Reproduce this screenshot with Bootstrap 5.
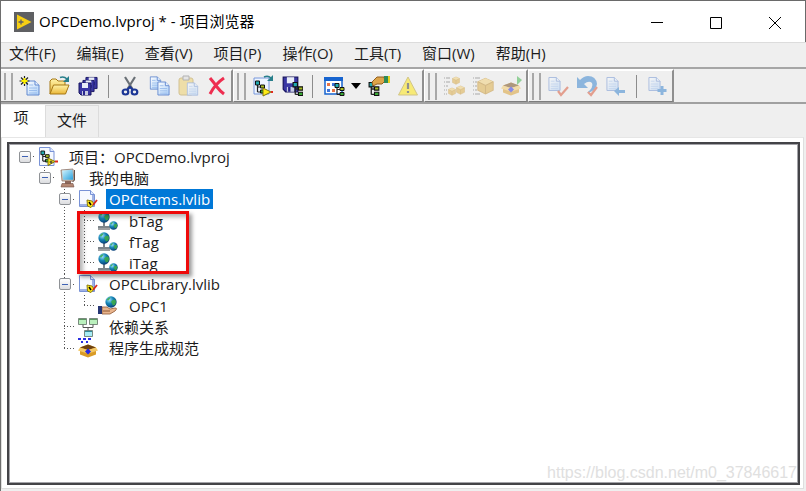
<!DOCTYPE html>
<html lang="zh-CN">
<head>
<meta charset="utf-8">
<meta name="viewport" content="width=device-width, initial-scale=1">
<title>OPCDemo.lvproj * - 项目浏览器</title>
<link href="https://cdn.jsdelivr.net/npm/bootstrap@5.3.0/dist/css/bootstrap.min.css" rel="stylesheet">
<style>
body { font-family: "Open Sans", "Noto Sans CJK SC", sans-serif; font-size: 15px; line-height: 20px; color: #1c1c1c; background: #efefef; }
.win { border-left: 1px solid #6e6e6e; }
.titlebar { height: 42px; border-top: 1px solid #6a6a6a; border-right: 1px solid #6a6a6a; background: #fff; color: #000; padding-right: 1px; }
.titlebar .caption-text { padding-bottom: 2px; }
.app-logo { width: 20px; height: 20px; margin-left: 13px; margin-right: 5px; }
.win-btn { width: 59px; height: 40px; }
.tool, .win-btn, .menu-btn { border: 0; background: transparent; padding: 0; color: inherit; }
.menubar { height: 27px; border-top: 1px solid #dcdcdc; border-bottom: 2px solid #a6a6a6; padding: 0 0 4px 8px; gap: 21px; }
.toolstrip { height: 35px; border-bottom: 2px solid #a0a0a0; }
.tool-group { height: 33px; border-top: 2px solid #fff; border-right: 2px solid #8f8f8f; border-bottom: 1px solid #7c7c7c; }
.tool-group + .tool-group { border-left: 1px solid #fff; }
.grip { width: 9px; height: 27px; margin: 0 2px 0 3px; border: solid #a8a8a8; border-width: 0 2px; }
.tool { width: 29px; height: 28px; }
.tool svg { width: 22px; height: 22px; display: block; margin: auto; }
.tool:disabled svg { opacity: .5; }
.tool-arrow { width: 16px; }
.tool-arrow svg { width: 10px; height: 6px; }
.tool-sep { width: 1px; height: 23px; margin: 0 6px; background: #8c8c8c; }
.tabs { height: 33px; padding-top: 1px; }
.tab-btn { border: 0; padding: 0; background: #efefef; color: inherit; }
.tab-btn.current { width: 44px; background: #fff; padding: 0 4px 8px 0; }
.tab-btn.other { width: 54px; border: 1px solid #dcdcdc; border-bottom: 0; padding-bottom: 3px; }
.page-body { border: 1px solid #dedede; border-top-color: #e6e6e6; background: #fff; padding: 4px 3px 3px 5px; margin-right: 2px; margin-bottom: 2px; }
.tree-box { border: 2px solid #434347; box-shadow: inset 0 0 0 1px #a3a3a8; padding: 2px 6px; }
.tree { height: 213px; }
.node { flex: 1 1 0; min-height: 0; }
.cell { width: 20px; align-self: stretch; --dots-v: repeating-linear-gradient(#555 0 1px, transparent 1px 3px); --dots-h: repeating-linear-gradient(90deg, #555 0 1px, transparent 1px 3px); background-repeat: no-repeat; }
.line-v { background-image: var(--dots-v); background-size: 1px 100%; background-position: 9px 0; }
.line-tee { background-image: var(--dots-v), var(--dots-h); background-size: 1px 100%, 11px 1px; background-position: 9px 0, 9px 10px; }
.line-end { background-image: var(--dots-v), var(--dots-h); background-size: 1px 11px, 11px 1px; background-position: 9px 0, 9px 10px; }
.line-h { background-image: var(--dots-h); background-size: 8px 1px; background-position: 12px 10px; }
.toggle { display: block; width: 12px; height: 12px; padding: 0; border: 1px solid #8f9296; border-radius: 2px; background: linear-gradient(#3f62b4, #3f62b4) center / 6px 1px no-repeat, linear-gradient(#fff, #dcdde0); }
.node-icon { width: 20px; height: 20px; margin: 0 8px 0 3px; flex: none; }
.node-label { padding: 0 3px; white-space: nowrap; }
.chosen { background: #0078d7; color: #fff; }
.callout-box { left: 68px; top: 67px; width: 112px; height: 63px; border: 3px solid #ee0a0a; box-shadow: 3px 3px 4px rgba(0,0,0,.4), inset 3px 3px 4px rgba(0,0,0,.3); pointer-events: none; }
.source-note { right: 1px; bottom: 0; font: 16px/20px "Liberation Sans", sans-serif; color: #e0e0e0; }
</style>
<script src="https://cdn.jsdelivr.net/npm/bootstrap@5.3.0/dist/js/bootstrap.bundle.min.js"></script>
</head>
<body>
<svg class="position-absolute" width="0" height="0" aria-hidden="true">
  <defs>
    <linearGradient id="gBlue" x2="1" y2="1"><stop stop-color="#fff"/><stop offset="1" stop-color="#a9cdf6"/></linearGradient>
    <linearGradient id="gGold" x2="0" y2="1"><stop stop-color="#fff3a8"/><stop offset="1" stop-color="#eab637"/></linearGradient>
    <radialGradient id="gGlobe" cx=".35" cy=".3" r=".75"><stop stop-color="#9fe0ff"/><stop offset=".45" stop-color="#1687b8"/><stop offset="1" stop-color="#083a74"/></radialGradient>
    <linearGradient id="gScreen" x2="1" y2="1"><stop stop-color="#d4f5ff"/><stop offset="1" stop-color="#28a0dc"/></linearGradient>
  </defs>
  <symbol id="page" viewBox="0 0 14 16"><path d="M1 1h8l4 4v10H1z" fill="url(#gBlue)" stroke="#6389cf"/><path d="M9 1v4h4" fill="#e7f1ff" stroke="#6389cf"/></symbol>
  <symbol id="textpage" viewBox="0 0 14 16"><use href="#page" width="14" height="16"/><path d="M3 5h4M3 8h8M3 10.500h8M3 13h8" stroke="#8db4ea" stroke-width=".8"/></symbol>
  <symbol id="hier" viewBox="0 0 12 14"><path d="M3 3v9M3 7h5M3 12h5" fill="none" stroke="#222" stroke-width="1.2"/><path d="M1 1h4v4H1z" fill="#20aab0" stroke="#111"/><path d="M6 5h4v3H6z" fill="#a7bd20" stroke="#111"/><path d="M6 10h4v3H6z" fill="#38a934" stroke="#111"/></symbol>
  <symbol id="globe" viewBox="0 0 10 10"><circle cx="5" cy="5" r="4.7" fill="url(#gGlobe)"/><path d="M1.500 3Q3 1 4.500 1L4 2.500 2.500 4zM6 3.500l2.500-.500.800 2-1 2.500L6.500 8 6 6.500 5 5z" fill="#3fae45" opacity=".85"/></symbol>
  <symbol id="floppy" viewBox="0 0 14 14"><path d="M1 1h12v12H3l-2-2z" fill="#3a37a4" stroke="#17145f"/><path d="M4 1h6v5H4z" fill="#e9edf8"/><path d="M4 9h6v4H4z" fill="#c7cbe0"/><path d="M5 9h2v4H5z" fill="#29268f"/></symbol>
  <symbol id="cube" viewBox="0 0 10 10"><path d="M5 .5 9.500 2.500v5L5 9.700.500 7.500v-5z" fill="#dcaa3b" stroke="#c18e2c" stroke-width=".6"/><path d="M5 .5 9.500 2.500 5 4.700.500 2.500z" fill="#f2cf73"/><path d="M5 4.700v5M.500 2.500 5 4.700l4.500-2.200" fill="none" stroke="#b98522" stroke-width=".6"/></symbol>
  <symbol id="openbox" viewBox="0 0 20 14"><path d="M2 4 10 1l8 3v7l-8 3-8-3z" fill="#d99b26"/><path d="m2 4 8 2.500L18 4 10 1z" fill="#6e4210"/><path d="M2 4 0 7l8 2.500 2-3zM18 4l2 3-8 2.500-2-3z" fill="#f3c868"/><path d="m10 5 3 3-3 3-3-3z" fill="#2329e4"/></symbol>
  <symbol id="computer" viewBox="0 0 20 20"><path d="m3 2 12-1 1 12H4z" fill="#d7c2b2" stroke="#8a766c" stroke-width=".8"/><path d="m4 2.500 10.500-.700.700 10H5z" fill="url(#gScreen)"/><path d="M7 13h6v3H7z" fill="#8c675a"/><path d="M4 15.500h11l1 3.500H3z" fill="#b48874" stroke="#725047" stroke-width=".6"/><path d="M16.500 2v10l-2 2" fill="none" stroke="#66524a"/></symbol>
  <symbol id="lib" viewBox="0 0 20 20"><path d="M1.500 1.500h11l4 4v12h-15z" fill="#f6f9ff" stroke="#7892d6"/><path d="M2 15h14v2H2zM14 5h2v11h-2z" fill="#9fb1e4"/><path d="M12.500 1.500v4h4" fill="#dce7ff" stroke="#7892d6"/><path d="m9 11 5 1 2 3-3 3.500L9.500 17z" fill="#ffe81a" stroke="#8c7d0c"/><path d="m11 13 2 3" stroke="#000" stroke-width="1.500"/><path d="m15 16 4-5" stroke="#d9261c" stroke-width="1.800"/></symbol>
  <symbol id="proj" viewBox="0 0 20 20"><path d="M1.500 .5H12l4 4v14H1.500z" fill="#f4f8ff" stroke="#7892d6"/><path d="M12 .5v4h4" fill="#dce7ff" stroke="#7892d6"/><use href="#hier" x="2" y="3" width="11" height="13"/><path d="m10 11 7 3.500-7 4z" fill="#ffec16" stroke="#7f750c"/><path d="M17 14.500h3" stroke="#e02b20" stroke-width="2"/><path d="M11.500 15h3M13 13.500v3" stroke="#333"/></symbol>
  <symbol id="tag" viewBox="0 0 20 20"><path d="M6 8v8M0 16h12" stroke="#7c858b" stroke-width="2"/><path d="M0 18h12" stroke="#3a4145"/><use href="#globe" x="0" y="0" width="12" height="12"/><use href="#globe" x="11" y="10" width="9" height="9"/></symbol>
  <symbol id="opc" viewBox="0 0 20 20"><path d="M4 11h5l3 2 5-1q3 0 0 3l-5 3H4z" fill="#e8b48d" stroke="#8e5630" stroke-width=".8"/><path d="M5 15h7" stroke="#8e5630"/><path d="M0 10h4v8H0z" fill="#273774"/><use href="#globe" x="7" y="0" width="12" height="12"/></symbol>
  <symbol id="deps" viewBox="0 0 20 20"><path d="M5 7v3.500h10V7M10 10v4" fill="none" stroke="#545454"/><g stroke="#5f6e64" stroke-width=".8"><path d="M.500 1.500h8v6h-8zM11.500 1.500h8v6h-8z" fill="#baf0bd"/><path d="M6.500 13.500h8v6h-8z" fill="#a8edf5"/></g><path d="M1 2h7v1H1zM12 2h7v1h-7z" fill="#5b9762"/><path d="M7 14h7v1H7z" fill="#328998"/></symbol>
  <symbol id="build" viewBox="0 0 20 20"><path d="M0 0h3v2H0zM5 0h3v2H5zM10 0h3v2h-3zM3 3h2v2H3zM8 3h2v2H8z" fill="#2a2ee0"/><use href="#openbox" x="0" y="5" width="20" height="15"/></symbol>
</svg>

<div class="win d-flex flex-column min-vh-100">
  <header class="titlebar d-flex align-items-center">
    <svg class="app-logo" viewBox="0 0 20 20" aria-hidden="true"><path fill="#5f6063" d="M0 0h20v20H0z"/><path d="M3 2.500v15L17.500 10z" fill="#f7cf14"/><path d="M4.500 10h5M7 7.500v5" stroke="#5f6063" stroke-width="1.300"/></svg>
    <div class="caption-text me-auto">OPCDemo.lvproj * - 项目浏览器</div>
    <button class="win-btn" type="button" aria-label="最小化"><svg width="12" height="12" viewBox="0 0 12 12"><path d="M0 5.500h12" stroke="#000"/></svg></button>
    <button class="win-btn" type="button" aria-label="最大化"><svg width="12" height="12" viewBox="0 0 12 12"><path d="M.500.500h11v11H.500z" fill="none" stroke="#000"/></svg></button>
    <button class="win-btn" type="button" aria-label="关闭"><svg width="12" height="12" viewBox="0 0 12 12"><path d="m0 0 12 12M12 0 0 12" stroke="#000"/></svg></button>
  </header>

  <nav class="menubar d-flex align-items-center" aria-label="菜单">
    <button class="menu-btn" type="button">文件(F)</button>
    <button class="menu-btn" type="button">编辑(E)</button>
    <button class="menu-btn" type="button">查看(V)</button>
    <button class="menu-btn" type="button">项目(P)</button>
    <button class="menu-btn" type="button">操作(O)</button>
    <button class="menu-btn" type="button">工具(T)</button>
    <button class="menu-btn" type="button">窗口(W)</button>
    <button class="menu-btn" type="button">帮助(H)</button>
  </nav>

  <div class="toolstrip d-flex" role="toolbar" aria-label="工具栏">
    <div class="tool-group d-flex align-items-center">
      <span class="grip"></span>
      <button class="tool" type="button" aria-label="新建"><svg viewBox="0 0 22 22"><use href="#textpage" x="7" y="5" width="14" height="16"/><path d="M5.500 1v10M.500 6h10M2 2.500l7 7M9 2.500l-7 7" stroke="#222" stroke-width="1.200"/><path d="M5.500 3v6M2.500 6h6" stroke="#fff200" stroke-width="2.200"/></svg></button>
      <button class="tool" type="button" aria-label="打开"><svg viewBox="0 0 22 22"><path d="M2 19V6l2-2h4l2 2h7v4" fill="url(#gGold)" stroke="#a67816"/><path d="m2 19 3.500-9H21l-3.500 9z" fill="url(#gGold)" stroke="#a67816"/><path d="M12 2.500q4-1.500 7 1.500" fill="none" stroke="#287f8b" stroke-width="1.500"/><path d="M21 1v6h-6z" fill="#287f8b"/></svg></button>
      <button class="tool" type="button" aria-label="全部保存"><svg viewBox="0 0 22 22"><use href="#floppy" x="8" y="1" width="13" height="14"/><use href="#floppy" x="5" y="4" width="13" height="14"/><use href="#floppy" x="1" y="7" width="14" height="14"/></svg></button>
      <span class="tool-sep"></span>
      <button class="tool" type="button" aria-label="剪切"><svg viewBox="0 0 22 22"><path d="m6 2 7.500 12M16 2 8.500 14" stroke="#6a7076" stroke-width="2.200"/><g fill="none" stroke="#1c3796" stroke-width="2.200"><ellipse cx="6.500" cy="17" rx="2.800" ry="2.500"/><ellipse cx="15.500" cy="17" rx="2.800" ry="2.500"/><path d="m8 15 3-3 3 3"/></g></svg></button>
      <button class="tool" type="button" aria-label="复制"><svg viewBox="0 0 22 22"><use href="#textpage" x="1" y="1" width="13" height="14"/><use href="#textpage" x="9" y="6" width="13" height="15"/></svg></button>
      <button class="tool" type="button" aria-label="粘贴" disabled><svg viewBox="0 0 22 22"><rect x="2" y="3" width="14" height="17" rx="2" fill="#eecf63" stroke="#b5943d"/><path d="M6 1h6v4H6z" fill="#ddd" stroke="#777"/><use href="#textpage" x="9" y="7" width="13" height="14"/></svg></button>
      <button class="tool" type="button" aria-label="删除"><svg viewBox="0 0 22 22"><path d="M4 3q5 6 7 9 3 4 7 7M18 3Q9 9 4 19" fill="none" stroke="#ee2e50" stroke-width="3"/></svg></button>
    </div>
    <div class="tool-group d-flex align-items-center">
      <span class="grip"></span>
      <button class="tool" type="button" aria-label="项目属性"><svg viewBox="0 0 22 22"><path d="M2 3h15v16H2z" fill="#eef5ff" stroke="#7898dc"/><use href="#hier" x="2" y="5" width="13" height="14"/><path d="m11 13 8 4-8 4z" fill="#ffec16" stroke="#7f750c"/><path d="M19 17h2" stroke="#e02b20" stroke-width="2"/><path d="M12 2q4-2 7 1" fill="none" stroke="#287f8b" stroke-width="1.500"/><path d="M21 0v6h-6z" fill="#287f8b"/></svg></button>
      <button class="tool" type="button" aria-label="保存项目"><svg viewBox="0 0 22 22"><use href="#floppy" x="1" y="1" width="17" height="17"/><use href="#hier" x="11" y="6" width="13" height="16"/></svg></button>
      <span class="tool-sep"></span>
      <button class="tool" type="button" aria-label="视图"><svg viewBox="0 0 22 22"><path d="M2 3h17v16H2z" fill="#fff" stroke="#1764cf" stroke-width="1.500"/><path d="M1 2h19v4H1z" fill="#1764cf"/><path d="M4 8h3v3H4zM9 14h3v3H9z" fill="#e87445"/><path d="M9 8h3v3H9zM4 14h3v3H4z" fill="#3e75dc"/><use href="#hier" x="11" y="7" width="12" height="15"/></svg></button>
      <button class="tool tool-arrow" type="button" aria-label="视图选项"><svg viewBox="0 0 10 6"><path d="M0 0h10L5 6z"/></svg></button>
      <button class="tool" type="button" aria-label="筛选"><svg viewBox="0 0 22 22"><use href="#hier" x="0" y="6" width="13" height="16"/><path d="M4 7 9 2h7l1 4-3 3H9l-4 2z" fill="#dda448" stroke="#925f20"/><path d="M16 1h5v7h-5z" fill="#2d8a58"/><path d="M20 1h2v7h-2z" fill="#e5d21e"/></svg></button>
      <button class="tool" type="button" aria-label="冲突" disabled><svg viewBox="0 0 22 22"><path d="M11 2 20.500 20h-19z" fill="#ffe600" stroke="#b59c23" stroke-linejoin="round"/><path d="M11 8v6M11 16v2" stroke="#333" stroke-width="2.200"/></svg></button>
    </div>
    <div class="tool-group d-flex align-items-center">
      <span class="grip"></span>
      <button class="tool" type="button" aria-label="全部生成" disabled><svg viewBox="0 0 22 22"><path d="M1 3h6M1 7h6M1 11h4M1 15h3M1 19h3" stroke="#666" stroke-dasharray="1 1 4 0"/><use href="#cube" x="9" y="1" width="8" height="9"/><use href="#cube" x="5" y="12" width="8" height="9"/><use href="#cube" x="13" y="10" width="9" height="10"/></svg></button>
      <button class="tool" type="button" aria-label="生成" disabled><svg viewBox="0 0 22 22"><path d="M1 3h7M1 7h4M1 11h4M1 15h4M1 19h7" stroke="#666" stroke-dasharray="1 1 5 0"/><use href="#cube" x="5" y="2" width="17" height="18"/></svg></button>
      <button class="tool" type="button" aria-label="部署" disabled><svg viewBox="0 0 22 22"><use href="#openbox" x="0" y="6" width="20" height="15"/><path d="m16 1 5 4-5 5z" fill="#38b344"/></svg></button>
    </div>
    <div class="tool-group d-flex align-items-center">
      <span class="grip"></span>
      <button class="tool" type="button" aria-label="签入" disabled><svg viewBox="0 0 22 22"><use href="#textpage" x="1" y="1" width="13" height="16"/><path d="m11 16 3 4 7-8" fill="none" stroke="#d8502f" stroke-width="2.200"/></svg></button>
      <button class="tool" type="button" aria-label="撤销签出" disabled><svg viewBox="0 0 22 22"><path d="M1 2v11h11L8 9q5-4 8-1 2 4-5 10 9-2 10-9-1-8-9-8-4 0-8 4z" fill="#2b7dcd"/><path d="m12 17 3 3 6-8" fill="none" stroke="#d8502f" stroke-width="2.200"/></svg></button>
      <button class="tool" type="button" aria-label="签出" disabled><svg viewBox="0 0 22 22"><use href="#textpage" x="1" y="1" width="13" height="16"/><path d="m9 16 5-4v3h6v3h-6v3z" fill="#2b7dcd"/></svg></button>
      <span class="tool-sep"></span>
      <button class="tool" type="button" aria-label="添加" disabled><svg viewBox="0 0 22 22"><use href="#textpage" x="1" y="1" width="13" height="16"/><path d="M15 11v9M10.500 15.500h9" stroke="#2b7dcd" stroke-width="3"/></svg></button>
    </div>
  </div>

  <div class="tabs d-flex" role="tablist">
    <button class="tab-btn current" type="button" role="tab" aria-selected="true">项</button>
    <button class="tab-btn other" type="button" role="tab" aria-selected="false">文件</button>
  </div>

  <main class="page-body flex-grow-1 d-flex">
    <div class="tree-box flex-grow-1 position-relative">
      <div class="tree d-flex flex-column" role="tree" aria-label="项目">
        <div class="node d-flex align-items-center" role="treeitem" aria-level="1">
          <span class="cell line-h d-flex align-items-center ps-1"><button class="toggle" type="button" aria-label="折叠"></button></span>
          <svg class="node-icon"><use href="#proj"/></svg><span class="node-label">项目：OPCDemo.lvproj</span>
        </div>
        <div class="node d-flex align-items-center" role="treeitem" aria-level="2">
          <span class="cell"></span><span class="cell line-end d-flex align-items-center ps-1"><button class="toggle" type="button" aria-label="折叠"></button></span>
          <svg class="node-icon"><use href="#computer"/></svg><span class="node-label">我的电脑</span>
        </div>
        <div class="node d-flex align-items-center" role="treeitem" aria-level="3">
          <span class="cell"></span><span class="cell"></span><span class="cell line-tee d-flex align-items-center ps-1"><button class="toggle" type="button" aria-label="折叠"></button></span>
          <svg class="node-icon"><use href="#lib"/></svg><span class="node-label chosen">OPCItems.lvlib</span>
        </div>
        <div class="node d-flex align-items-center" role="treeitem" aria-level="4">
          <span class="cell"></span><span class="cell"></span><span class="cell line-v"></span><span class="cell line-tee"></span>
          <svg class="node-icon"><use href="#tag"/></svg><span class="node-label">bTag</span>
        </div>
        <div class="node d-flex align-items-center" role="treeitem" aria-level="4">
          <span class="cell"></span><span class="cell"></span><span class="cell line-v"></span><span class="cell line-tee"></span>
          <svg class="node-icon"><use href="#tag"/></svg><span class="node-label">fTag</span>
        </div>
        <div class="node d-flex align-items-center" role="treeitem" aria-level="4">
          <span class="cell"></span><span class="cell"></span><span class="cell line-v"></span><span class="cell line-end"></span>
          <svg class="node-icon"><use href="#tag"/></svg><span class="node-label">iTag</span>
        </div>
        <div class="node d-flex align-items-center" role="treeitem" aria-level="3">
          <span class="cell"></span><span class="cell"></span><span class="cell line-tee d-flex align-items-center ps-1"><button class="toggle" type="button" aria-label="折叠"></button></span>
          <svg class="node-icon"><use href="#lib"/></svg><span class="node-label">OPCLibrary.lvlib</span>
        </div>
        <div class="node d-flex align-items-center" role="treeitem" aria-level="4">
          <span class="cell"></span><span class="cell"></span><span class="cell line-v"></span><span class="cell line-end"></span>
          <svg class="node-icon"><use href="#opc"/></svg><span class="node-label">OPC1</span>
        </div>
        <div class="node d-flex align-items-center" role="treeitem" aria-level="3">
          <span class="cell"></span><span class="cell"></span><span class="cell line-tee"></span>
          <svg class="node-icon"><use href="#deps"/></svg><span class="node-label">依赖关系</span>
        </div>
        <div class="node d-flex align-items-center" role="treeitem" aria-level="3">
          <span class="cell"></span><span class="cell"></span><span class="cell line-end"></span>
          <svg class="node-icon"><use href="#build"/></svg><span class="node-label">程序生成规范</span>
        </div>
      </div>
      <div class="callout-box position-absolute"></div>
      <div class="source-note position-absolute">https://blog.csdn.net/m0_37846617</div>
    </div>
  </main>
</div>
</body>
</html>
